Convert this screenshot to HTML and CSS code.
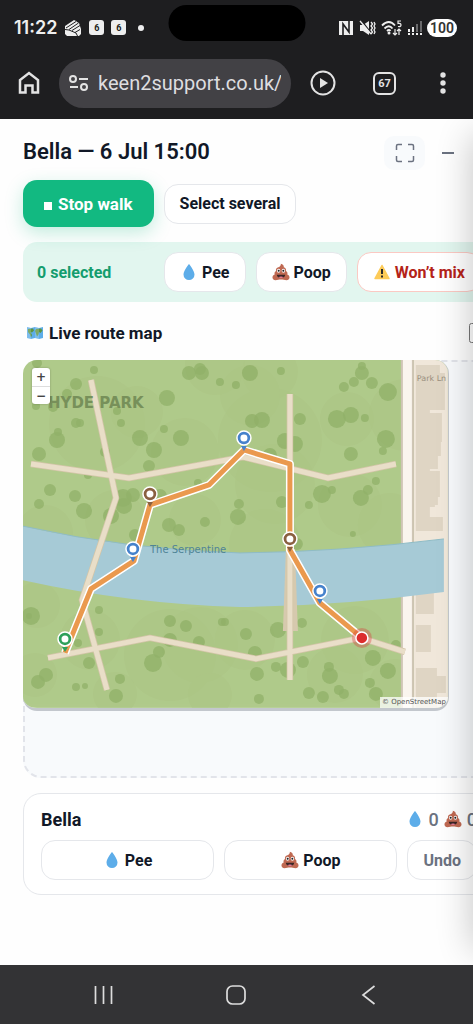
FILE: index.html
```
<!DOCTYPE html>
<html lang="en">
<head>
    <meta charset="UTF-8">
    <meta name="viewport" content="width=device-width, initial-scale=1.0">
    <title>Bella - Live walk</title>
    <link rel="stylesheet" href="styles.css">
</head>
<body>
    <!-- Shared icons -->
    <svg class="sprite" aria-hidden="true">
        <symbol id="drop" viewBox="0 0 18 18">
            <path d="M9 1C9 1 3.500 7.500 3.500 11.500a5.500 5.500 0 0 0 11 0C14.500 7.500 9 1 9 1z" fill="#5dade9"/>
        </symbol>
        <symbol id="poop" viewBox="0 0 18 18">
            <path d="M8.800.8c2 .3 3.300 1.600 3 3.500 1.800.6 2.600 2 2.200 3.800 1.400.8 1.800 2 1.300 3.300 1.500.5 2.400 1.700 2.200 3.400-.2 1.500-1.300 2.400-3 2.400-2 0-3.400-.6-5.500-.6s-3.400.6-5.500.6c-1.700 0-2.800-.9-3-2.400-.2-1.700.7-2.900 2.200-3.400-.5-1.300-.1-2.500 1.300-3.300-.4-2 .6-3.300 2.400-3.800C8 3.600 9.200 2.400 8.800.8z" fill="#bf6952"/>
            <ellipse cx="6.600" cy="7.700" rx="1.700" ry="2" fill="#fafafa"/>
            <ellipse cx="11.400" cy="7.700" rx="1.700" ry="2" fill="#fafafa"/>
            <circle cx="6.700" cy="7.800" r="1" fill="#222"/>
            <circle cx="11.300" cy="7.800" r="1" fill="#222"/>
            <path d="M4.800 11.800h8.400c0 2-1.600 3.200-4.200 3.200s-4.200-1.200-4.200-3.200z" fill="#3a2626"/>
            <path d="M6.500 14.200c1-.9 4-.9 5 0-1.200 1-3.800 1-5 0z" fill="#ef7f9d"/>
        </symbol>
        <symbol id="warn" viewBox="0 0 18 18">
            <path d="M9 2.500 16 15.500H2z" fill="#fdcb58" stroke="#fdcb58" stroke-width="1.500" stroke-linejoin="round"/>
            <path d="M9 6v5M9 12.500v2" stroke="#2b2b2b" stroke-width="2"/>
        </symbol>
        <symbol id="worldmap" viewBox="0 0 18 18">
            <path d="m1 3 4 1 4-1 4 1 4-1v11l-4 1-4-1-4 1-4-1z" fill="#5dade9"/>
            <path d="m2 5 5-.5 1 2-2 2-1.500-.5L6 11l-1 2.500-1-3L2 8zM10 5l5-.5 1.500 2-2 2.500-1.500-1-.5 2.500-1.500 2L9.800 9 9 7z" fill="#5c9444"/>
            <path d="M1 3v11l4 1V4zM9 3v11l4 1V4z" fill="#fff" opacity=".2"/>
        </symbol>
    </svg>

    <header class="chrome">
        <div class="status-bar">
            <span class="clock">11:22</span>
            <svg width="18" height="18" viewBox="0 0 18 18" aria-hidden="true">
                <path d="M1 7 10 1l2 1 1 1 2 1 1 3 1 3v5l-2 2H3l-2-2z" fill="#eee"/>
                <path d="M2 9 12 2.500M5 10.500l9.500-6.500M8 11.500l8-5M1 10.500l4 .5 7 3 1.500 3M11 13.500l5-3" fill="none" stroke="#1e1e20" stroke-width="1"/>
            </svg>
            <span class="calendar">6</span>
            <span class="calendar">6</span>
            <span class="dot"></span>
            <span class="camera"></span>
            <div class="status-icons">
                <svg width="16" height="16" viewBox="0 0 16 16" aria-hidden="true">
                    <path d="M1 1h14v14H1z" fill="#eee"/>
                    <path d="M5 15V4l6 8V1" fill="none" stroke="#1e1e20" stroke-width="1.600"/>
                </svg>
                <svg width="17" height="16" viewBox="0 0 17 16" aria-hidden="true">
                    <path d="M1 5h3l6-4v14l-6-4H1z" fill="#eee"/>
                    <path d="m2 0 10 13" stroke="#1e1e20" stroke-width="1.500"/>
                    <path d="m1 1 11 13M12 2l1.500 2L12 6l1.500 2-1.500 2 1.500 2-1.500 2M15 2l1 2-1 2 1 2-1 2 1 2-1 2" fill="none" stroke="#eee" stroke-width="1.300"/>
                </svg>
                <svg width="21" height="16" viewBox="0 0 21 16" aria-hidden="true">
                    <path d="M1 5.500q7-7 13 0M3.500 8.500q4.500-4.500 8 0M6 11q2-2 3.500 0" fill="none" stroke="#eee" stroke-width="1.800"/>
                    <circle cx="8" cy="13" r="1.500" fill="#eee"/>
                    <path d="M20 1h-3v2.500q3-.5 3 1.500t-3 1.500M14 9v6m-2-2 2 2 2-2M18 15V9m-2 2 2-2 2 2" fill="none" stroke="#eee" stroke-width="1.200"/>
                </svg>
                <svg width="15" height="16" viewBox="0 0 15 16" aria-hidden="true">
                    <path d="M2 9v3M6 7v5M2 13v2M6 13v2M10 13v2M14 13v2" stroke="#eee" stroke-width="2"/>
                    <path d="M10 4v8M14 1v11" stroke="#6a6a6c" stroke-width="2"/>
                </svg>
                <span class="battery">100</span>
            </div>
        </div>
        <div class="browser-bar">
            <button class="chrome-btn" aria-label="Home">
                <svg width="22" height="24" viewBox="0 0 22 24" fill="none" stroke="#e3e3e3" stroke-width="2.500">
                    <path d="M2 9v12.500h5.500v-7h7v7H20V9l-9-7z"/>
                </svg>
            </button>
            <div class="address">
                <svg width="20" height="18" viewBox="0 0 20 18" fill="none" stroke="#e3e3e3" stroke-width="2" aria-hidden="true">
                    <circle cx="4" cy="5" r="3"/><circle cx="15" cy="13" r="3"/>
                    <path d="M10 5h9M1 13h8"/>
                </svg>
                <input type="text" value="keen2support.co.uk/a" aria-label="Address">
            </div>
            <button class="chrome-btn" aria-label="Play">
                <svg width="26" height="26" viewBox="0 0 26 26">
                    <circle cx="13" cy="13" r="11.500" fill="none" stroke="#e3e3e3" stroke-width="2"/>
                    <path d="m10 8 8 5-8 5z" fill="#e3e3e3"/>
                </svg>
            </button>
            <button class="tabs" aria-label="Tabs">67</button>
            <button class="chrome-btn menu" aria-label="Menu">
                <svg width="6" height="22" viewBox="0 0 6 22" fill="#e3e3e3">
                    <circle cx="3" cy="3" r="2.700"/><circle cx="3" cy="11" r="2.700"/><circle cx="3" cy="19" r="2.700"/>
                </svg>
            </button>
        </div>
    </header>

    <main class="page">
        <div class="panel">
            <div class="panel-header">
                <h1>Bella — 6 Jul 15:00</h1>
                <button class="icon-btn filled" aria-label="Full screen">
                    <svg width="20" height="20" viewBox="0 0 20 20" fill="none" stroke="#6b7280" stroke-width="1.500">
                        <path d="M1.500 7V3q0-1.500 1.500-1.500h4M13 1.500h4q1.500 0 1.500 1.500v4M18.500 13v4q0 1.500-1.500 1.500h-4M7 18.500H3q-1.500 0-1.500-1.500v-4"/>
                    </svg>
                </button>
                <button class="icon-btn" aria-label="Minimise">
                    <svg width="14" height="14" viewBox="0 0 14 14"><path d="M1 7h12" stroke="#6b7280" stroke-width="2"/></svg>
                </button>
            </div>

            <div class="actions">
                <button class="btn btn-primary"><span class="stop"></span>Stop walk</button>
                <button class="btn">Select several</button>
            </div>

            <div class="selection-bar">
                <span class="selected-count">0 selected</span>
                <button class="btn"><svg class="emoji"><use href="#drop"/></svg>Pee</button>
                <button class="btn"><svg class="emoji"><use href="#poop"/></svg>Poop</button>
                <button class="btn btn-danger"><svg class="emoji"><use href="#warn"/></svg>Won’t mix</button>
            </div>

            <div class="map-title">
                <h2><svg class="emoji"><use href="#worldmap"/></svg>Live route map</h2>
                <input type="checkbox" aria-label="Show live route map">
            </div>

            <div class="map-area">
                <div class="map">
                    <svg class="map-canvas" viewBox="23 360 425 348">
                        <rect x="22" y="360" width="426" height="348" fill="#b0cb8c"/>
                        <g id="patches" fill="#a2bb7a" opacity=".3"></g>
                        <g id="trees" fill="#7fa256" opacity=".6"></g>
                        <rect x="414" y="360" width="34" height="348" fill="#f0e7da"/>
                        <rect x="401" y="360" width="13" height="348" fill="#cfc5b5"/>
                        <rect x="403" y="360" width="9" height="348" fill="#faf5ee"/>
                        <path fill="#dfd5c4" d="M416 365h24v8h5v37h-15v3h12v29h-1v14h-3v13h-8v2h10v26h-2v8h-3v2h-5v10h13v14h-27zM416 593h18v21h-18zM416 625h15v27h-15zM416 668h21v8h9v17h-9v15h-21z"/>
                        <path fill="#a6cad6" d="M22 526 Q130 550 240 553 Q340 552 444 539 V592 Q340 606 240 607 Q130 604 22 580z"/>
                        <path fill="none" stroke="#8fbcc6" stroke-width="1" d="M22 526 Q130 550 240 553 Q340 552 444 539"/>
                        <path fill="#d6c9ae" d="M286 549h9l3 82h-15z"/>
                        <g fill="none" stroke-linejoin="round">
                            <path d="M91 380 116 498 82 600 107 690M31 464 129 478 243 457 328 478 396 464M290 394V680M48 658 150 638 256 659 361 638 405 652" stroke="#d3c5a8" stroke-width="6.500"/>
                            <path d="M91 380 116 498 82 600 107 690M31 464 129 478 243 457 328 478 396 464M290 394V680M48 658 150 638 256 659 361 638 405 652" stroke="#e9dec8" stroke-width="5"/>
                        </g>
                        <text class="map-park" x="48" y="408">HYDE PARK</text>
                        <text class="map-water" x="150" y="553">The Serpentine</text>
                        <text class="map-street" x="417" y="381">Park Ln</text>
                        <g fill="none" stroke-linejoin="round">
                            <path d="M65 653 91 589 134 561 150 505 209 485 244 450 290 464V550L320 603 362 638" stroke="#fff" stroke-width="8"/>
                            <path d="M65 653 91 589 134 561 150 505 209 485 244 450 290 464V550L320 603 362 638" stroke="#ea994e" stroke-width="5"/>
                        </g>
                        <g id="pins"></g>
                        <circle cx="362" cy="638" r="10" fill="#d93636" opacity=".35"/>
                        <circle cx="362" cy="638" r="6" fill="#dc2d2d" stroke="#fff" stroke-width="1.500"/>
                    </svg>
                    <div class="map-zoom">
                        <button aria-label="Zoom in">+</button>
                        <button aria-label="Zoom out">−</button>
                    </div>
                    <span class="attribution">© OpenStreetMap</span>
                </div>
            </div>

            <section class="dog-card">
                <div class="dog-header">
                    <h2>Bella</h2>
                    <div class="counts">
                        <svg class="emoji"><use href="#drop"/></svg><span>0</span>
                        <svg class="emoji"><use href="#poop"/></svg><span>0</span>
                    </div>
                </div>
                <div class="dog-actions">
                    <button class="btn"><svg class="emoji"><use href="#drop"/></svg>Pee</button>
                    <button class="btn"><svg class="emoji"><use href="#poop"/></svg>Poop</button>
                    <button class="btn btn-muted">Undo</button>
                </div>
            </section>
        </div>
        <div class="edge-shadow"></div>
    </main>

    <nav class="nav-bar">
        <button aria-label="Recent apps">
            <svg width="20" height="20" viewBox="0 0 20 20"><path d="M1.500 1v18M9.500 1v18M17.500 1v18" stroke="#ddd" stroke-width="1.700"/></svg>
        </button>
        <button aria-label="Home">
            <svg width="22" height="22" viewBox="0 0 22 22"><rect x="2" y="2" width="18" height="18" rx="5.500" fill="none" stroke="#ddd" stroke-width="1.700"/></svg>
        </button>
        <button aria-label="Back">
            <svg width="20" height="20" viewBox="0 0 20 20"><path d="M15.500 1 4 10l11.500 9" fill="none" stroke="#ddd" stroke-width="1.700"/></svg>
        </button>
    </nav>

    <script>
        // x, y, radius
        const patches = [
            [97, 424, 48], [137, 412, 26], [185, 452, 34], [45, 533, 28], [115, 520, 30],
            [195, 520, 26], [270, 440, 52], [347, 419, 27], [405, 415, 36], [275, 484, 40],
            [350, 505, 32], [390, 525, 32], [265, 545, 36], [270, 372, 28], [250, 395, 30],
            [215, 365, 30], [37, 605, 23], [170, 655, 46], [200, 645, 38], [115, 694, 22],
            [210, 695, 22], [35, 675, 22], [335, 675, 28], [355, 640, 34], [245, 640, 30],
            [395, 685, 26], [90, 640, 30]
        ];
        const trees = [
            [37, 363, 5], [94, 370, 4], [76, 384, 6], [67, 394, 5], [53, 407, 5], [36, 406, 4],
            [189, 373, 7], [202, 373, 7], [200, 369, 6], [220, 382, 4], [236, 385, 4], [167, 398, 8],
            [117, 411, 4], [121, 423, 4], [76, 423, 5], [80, 423, 4], [58, 432, 4], [57, 440, 8],
            [164, 429, 4], [140, 438, 8], [181, 438, 8], [154, 450, 8], [39, 454, 7], [105, 452, 5],
            [149, 466, 6], [88, 475, 4], [198, 483, 4], [50, 490, 6], [75, 496, 6], [123, 498, 9],
            [133, 495, 7], [124, 506, 8], [111, 516, 8], [84, 511, 8], [39, 504, 5], [160, 496, 7],
            [169, 525, 7], [179, 530, 6], [205, 522, 5], [135, 535, 6], [239, 504, 5], [238, 517, 8],
            [250, 373, 8], [281, 371, 4], [362, 366, 4], [362, 373, 7], [354, 382, 5], [344, 387, 5],
            [372, 383, 6], [388, 392, 9], [262, 420, 8], [252, 421, 7], [300, 419, 6], [337, 419, 9],
            [351, 415, 8], [365, 418, 4], [285, 441, 8], [295, 444, 8], [386, 439, 9], [383, 451, 4],
            [351, 454, 7], [270, 455, 7], [322, 494, 9], [332, 490, 4], [309, 505, 4], [361, 498, 8],
            [368, 490, 5], [376, 481, 4], [282, 502, 6], [353, 534, 3], [31, 616, 9], [29, 616, 3],
            [99, 610, 4], [99, 632, 4], [78, 643, 4], [89, 663, 6], [170, 621, 6], [186, 626, 6],
            [222, 622, 4], [225, 622, 4], [170, 640, 7], [199, 642, 6], [159, 652, 6], [153, 663, 9],
            [120, 679, 5], [116, 696, 7], [76, 687, 4], [85, 686, 3], [46, 675, 7], [38, 682, 7],
            [297, 544, 6], [246, 634, 6], [278, 630, 8], [302, 623, 5], [255, 653, 7], [257, 674, 7],
            [276, 667, 5], [288, 670, 8], [303, 662, 6], [329, 667, 5], [330, 676, 8], [373, 658, 8],
            [388, 671, 8], [370, 683, 5], [376, 694, 7], [309, 693, 6], [323, 697, 6], [339, 690, 5],
            [344, 694, 5], [259, 699, 5], [396, 645, 5]
        ];
        const pins = [
            [65, 639, '#2ea05a'], [133, 549, '#4682cc'], [150, 494, '#8a6040'],
            [244, 438, '#4682cc'], [290, 539, '#8a6040'], [320, 591, '#4682cc']
        ];

        const circle = ([x, y, r]) => `<circle cx="${x}" cy="${y}" r="${r}" fill-opacity=".8"/>`;
        document.getElementById('patches').innerHTML = patches.map(circle).join('');
        document.getElementById('trees').innerHTML = trees.map(circle).join('');
        document.getElementById('pins').innerHTML = pins.map(([x, y, color]) => `
            <path d="M${x - 3} ${y + 8}h6l-3 5z" fill="${color}"/>
            <circle cx="${x}" cy="${y}" r="7" fill="${color}" stroke="#fff" stroke-width="1.500"/>
            <circle cx="${x}" cy="${y}" r="3.500" fill="#fff"/>
        `).join('');
    </script>
</body>
</html>
```
FILE: styles.css
```
:root {
    --chrome: #1e1e20;
    --text: #111827;
    --muted: #6b7280;
    --border: #e5e7eb;
    --green: #12b981;
}

* {
    box-sizing: border-box;
    margin: 0;
    padding: 0;
}

body {
    display: flex;
    flex-direction: column;
    min-height: 100vh;
    font-family: Roboto, sans-serif;
    color: var(--text);
    background: #fefefe;
}

button {
    font-family: inherit;
    border: none;
    background: none;
    cursor: pointer;
}

svg {
    display: block;
    flex: none;
}

.sprite {
    position: absolute;
    width: 0;
    height: 0;
}

/* Phone status and browser bars */
.chrome {
    background: var(--chrome);
    color: #eee;
    height: 119px;
}

.status-bar {
    position: relative;
    display: flex;
    align-items: center;
    gap: 4px;
    height: 55px;
    padding: 0 16px 0 14px;
}

.clock {
    font-family: Inter, sans-serif;
    font-size: 18px;
    font-weight: 600;
    margin-right: 3px;
}

.calendar {
    width: 15px;
    height: 15px;
    margin-left: 3px;
    border-radius: 3px;
    background: #eee;
    color: var(--chrome);
    font-size: 9px;
    font-weight: 700;
    line-height: 16px;
    text-align: center;
}

.dot {
    width: 6px;
    height: 6px;
    margin-left: 8px;
    border-radius: 50%;
    background: #eee;
}

.camera {
    position: absolute;
    top: 5px;
    left: 50%;
    width: 137px;
    height: 36px;
    border-radius: 18px;
    background: #000;
    transform: translateX(-50%);
}

.status-icons {
    display: flex;
    align-items: center;
    gap: 5px;
    margin-left: auto;
}

.battery {
    width: 30px;
    border-radius: 9px;
    background: #fff;
    color: #333;
    font-size: 14px;
    font-weight: 600;
    line-height: 18px;
    text-align: center;
}

.browser-bar {
    display: flex;
    align-items: center;
    height: 56px;
    padding: 0 18px;
}

.address {
    display: flex;
    align-items: center;
    gap: 9px;
    flex: 1;
    min-width: 0;
    height: 49px;
    margin: 0 19px;
    padding: 0 10px;
    border-radius: 25px;
    background: #424145;
}

.address input {
    flex: 1;
    min-width: 0;
    border: none;
    outline: none;
    background: none;
    color: #dedee0;
    font-family: Roboto, sans-serif;
    font-size: 20px;
}

.tabs {
    width: 23px;
    height: 23px;
    margin: 0 44px 0 37px;
    border: 2px solid #e3e3e3;
    border-radius: 6px;
    color: #e3e3e3;
    font-size: 11px;
    font-weight: 700;
}

.menu {
    margin-right: 9px;
}

/* Walk page: the panel runs past the right edge of the window */
.page {
    position: relative;
    flex: 1;
    padding: 16px 0 24px 23px;
    overflow: hidden;
}

.panel {
    width: calc(100% + 22px);
}

.panel-header {
    display: flex;
    align-items: center;
    gap: 2px;
    height: 36px;
    padding-right: 27px;
}

h1 {
    flex: 1;
    padding-bottom: 4px;
    font-size: 22px;
    font-weight: 600;
}

h2 {
    font-size: 18px;
    font-weight: 700;
}

.icon-btn {
    display: flex;
    align-items: center;
    justify-content: center;
    width: 41px;
    height: 34px;
    border-radius: 10px;
}

.filled {
    background: #f8fafc;
}

.emoji {
    width: 18px;
    height: 18px;
}

.btn {
    display: flex;
    align-items: center;
    justify-content: center;
    gap: 4px;
    height: 40px;
    padding: 0 15px;
    border: 1px solid var(--border);
    border-radius: 14px;
    background: #fff;
    color: var(--text);
    font-size: 16px;
    font-weight: 700;
    white-space: nowrap;
}

.btn-primary {
    gap: 6px;
    height: 47px;
    padding: 0 21px;
    border: none;
    background: var(--green);
    color: #fff;
    font-size: 17px;
    box-shadow: 0 6px 18px rgba(18, 185, 129, 0.25);
}

.btn-danger {
    border-color: #fbc9c3;
    color: #b42318;
}

.btn-muted {
    color: var(--muted);
}

.stop {
    width: 8px;
    height: 8px;
    margin-top: 4px;
    background: #fff;
}

.actions {
    display: flex;
    align-items: center;
    gap: 10px;
    margin-top: 9px;
}

.selection-bar {
    display: flex;
    align-items: center;
    gap: 10px;
    height: 60px;
    margin-top: 15px;
    padding: 0 14px;
    border-radius: 14px;
    background: #e2f6ef;
}

.selected-count {
    flex: 1;
    color: #149d6e;
    font-size: 16px;
    font-weight: 700;
}

.map-title {
    display: flex;
    align-items: center;
    justify-content: space-between;
    height: 58px;
    padding: 4px 6px 0 3px;
}

.map-title h2,
.counts {
    display: flex;
    align-items: center;
    gap: 5px;
}

.map-title h2 {
    font-size: 17px;
}

.map-title input {
    width: 20px;
    height: 20px;
}

.map-area {
    height: 418px;
    border: 2px dashed #e2e4ea;
    border-radius: 18px;
    background: #f8fafc;
}

.map {
    position: relative;
    width: 91%;
    margin: -2px 0 0 -2px;
    border-right: 1px solid #c3c7cd;
    border-bottom: 3px solid #c3c7cd;
    border-radius: 14px;
    overflow: hidden;
}

.map-canvas {
    width: 100%;
    height: auto;
}

.map-canvas text {
    font-family: "DejaVu Sans", sans-serif;
}

.map-park {
    fill: #77905a;
    font-size: 15px;
    font-weight: 700;
}

.map-water {
    fill: #4f8496;
    font-size: 10px;
}

.map-street {
    fill: #9b9080;
    font-size: 8px;
}

.map-zoom {
    position: absolute;
    top: 8px;
    left: 9px;
    display: flex;
    flex-direction: column;
    width: 18px;
    border-radius: 3px;
    background: #fff;
    box-shadow: 0 0 2px rgba(0, 0, 0, 0.3);
}

.map-zoom button {
    height: 18px;
    color: #444;
    font-family: "DejaVu Sans", sans-serif;
    font-size: 12px;
    font-weight: 700;
    line-height: 18px;
}

.map-zoom button + button {
    border-top: 1px solid #ddd;
}

.attribution {
    position: absolute;
    right: 0;
    bottom: 0;
    padding: 0 2px;
    background: rgba(255, 255, 255, 0.75);
    color: #555;
    font-family: "DejaVu Sans", sans-serif;
    font-size: 7px;
    line-height: 11px;
}

.dog-card {
    margin-top: 15px;
    padding: 13px 17px 14px;
    border: 1px solid var(--border);
    border-radius: 18px;
    background: #fff;
}

.dog-header {
    display: flex;
    align-items: center;
    justify-content: space-between;
    height: 24px;
    margin-bottom: 9px;
}

.counts {
    color: var(--muted);
    font-size: 18px;
    font-weight: 500;
}

.dog-actions {
    display: grid;
    grid-template-columns: 1fr 1fr auto;
    gap: 10px;
}

.edge-shadow {
    position: absolute;
    top: 16px;
    bottom: 16px;
    left: 100%;
    width: 40px;
    box-shadow: 0 0 36px rgba(0, 0, 0, 0.24);
    pointer-events: none;
}

/* Phone navigation */
.nav-bar {
    display: flex;
    align-items: center;
    justify-content: space-around;
    height: 59px;
    padding: 0 38px;
    background: #333335;
}
```
